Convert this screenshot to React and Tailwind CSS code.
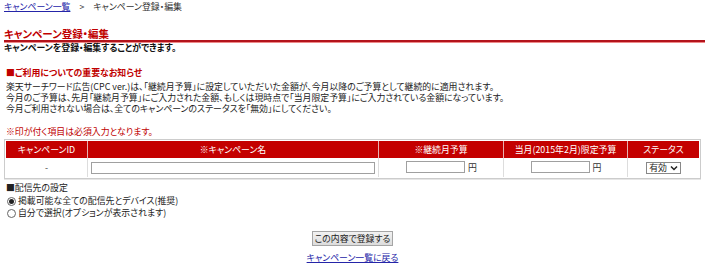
import React from 'react';

const FONT = "font-['Noto_Sans_CJK_JP','Noto_Sans_CJK_SC',sans-serif] [font-feature-settings:'palt']";

function Radio({ checked }) {
  return (
    <span className="inline-flex w-[9px] h-[9px] rounded-full border border-[#666] bg-white items-center justify-center mr-[2px]">
      {checked && <span className="w-[5px] h-[5px] rounded-full bg-[#222]" />}
    </span>
  );
}

function YenInput() {
  return (
    <div className="flex items-center justify-center gap-[3px]">
      <span className="block w-[59px] h-[12px] border border-[#a0a0a0] bg-white" />
      <span className="text-[#333] w-[8px]">円</span>
    </div>
  );
}

export default function App() {
  const headers = ['キャンペーンID', '※キャンペーン名', '※継続月予算', '当月(2015年2月)限定予算', 'ステータス'];

  return (
    <div className={`${FONT} w-[705px] h-[267px] bg-white text-[#222] text-[8.9px] pl-[4px] overflow-hidden`}>
      {/* breadcrumb */}
      <div className="h-[14px] leading-[14px] flex items-center text-[#333]">
        <a href="#" className="text-[#2525a8] underline">キャンペーン一覧</a>
        <span className="mx-[9px]">&gt;</span>
        <span>キャンペーン登録・編集</span>
      </div>

      {/* title */}
      <h1 className="mt-[14px] h-[12px] leading-[12px] text-[10.5px] font-bold text-[#c00000]">キャンペーン登録・編集</h1>
      <div className="h-[3px] bg-[#b3131b] border-b border-[#e88]" />
      <p className="h-[10px] leading-[10px] font-bold text-[#111] mt-0">キャンペーンを登録・編集することができます。</p>

      {/* notice */}
      <div className="pl-[2px]">
        <p className="mt-[14px] h-[11px] leading-[11px] font-bold text-[#c00000]">■ご利用についての重要なお知らせ</p>
        <div className="mt-[3px] text-[#222]">
          <p className="h-[11px] leading-[11px]">楽天サーチワード広告(CPC ver.)は、「継続月予算」に設定していただいた金額が、今月以降のご予算として継続的に適用されます。</p>
          <p className="h-[11px] leading-[11px]">今月のご予算は、先月「継続月予算」にご入力された金額、もしくは現時点で「当月限定予算」にご入力されている金額になっています。</p>
          <p className="h-[11px] leading-[11px]">今月ご利用されない場合は、全てのキャンペーンのステータスを「無効」にしてください。</p>
        </div>
        <p className="mt-[12px] h-[11px] leading-[11px] text-[#c00000]">※印が付く項目は必須入力となります。</p>
      </div>

      {/* table */}
      <div className="mt-[2px] w-[697px] border border-[#ccc] p-px shadow-[0_1px_0_#e6e6e6]">
        <div className="grid grid-cols-[82px_291px_125px_124px_1fr] bg-[#c40000] text-white h-[17px] items-stretch">
          {headers.map((h, i) => (
            <div
              key={h}
              className={`flex items-center justify-center leading-[17px] ${i < 4 ? 'border-r border-[#e8b0b0]' : ''}`}
            >
              {h}
            </div>
          ))}
        </div>
        <div className="grid grid-cols-[82px_291px_125px_124px_1fr] h-[19px] items-stretch bg-white">
          <div className="flex items-center justify-center border-r border-[#ddd] text-[#333]">-</div>
          <div className="flex items-center px-[3px] border-r border-[#ddd]">
            <span className="block w-full h-[12px] border border-[#a0a0a0] bg-white" />
          </div>
          <div className="flex items-center justify-center border-r border-[#ddd]">
            <YenInput />
          </div>
          <div className="flex items-center justify-center border-r border-[#ddd]">
            <YenInput />
          </div>
          <div className="flex items-center justify-center">
            <span className="flex items-center gap-[2px] h-[12px] pl-[2px] pr-[2px] border border-[#888] bg-white leading-[10px] text-[#222]">
              有効
              <svg width="8" height="6" viewBox="0 0 8 6" className="ml-[1px]">
                <path d="M1 1.5 L4 4.5 L7 1.5" fill="none" stroke="#222" strokeWidth="1.5" />
              </svg>
            </span>
          </div>
        </div>
      </div>

      {/* delivery settings */}
      <div className="pl-[2px] text-[#222]">
        <p className="mt-[3px] h-[12px] leading-[12px]">■配信先の設定</p>
        <div className="mt-[1px] h-[12px] leading-[12px] flex items-center pl-[1px]">
          <Radio checked />
          <span>掲載可能な全ての配信先とデバイス(推奨)</span>
        </div>
        <div className="h-[12px] leading-[12px] flex items-center pl-[1px]">
          <Radio />
          <span>自分で選択(オプションが表示されます)</span>
        </div>
      </div>

      {/* actions */}
      <div className="flex flex-col items-center pr-[4px]">
        <button className="mt-[12px] h-[15px] w-[81px] whitespace-nowrap border border-[#a5a5a5] bg-gradient-to-b from-[#f2f2f2] to-[#dcdcdc] leading-[13px] text-[#222]">
          この内容で登録する
        </button>
        <a href="#" className="mt-[6px] h-[12px] leading-[12px] text-[#2525a8] underline">キャンペーン一覧に戻る</a>
      </div>
    </div>
  );
}
